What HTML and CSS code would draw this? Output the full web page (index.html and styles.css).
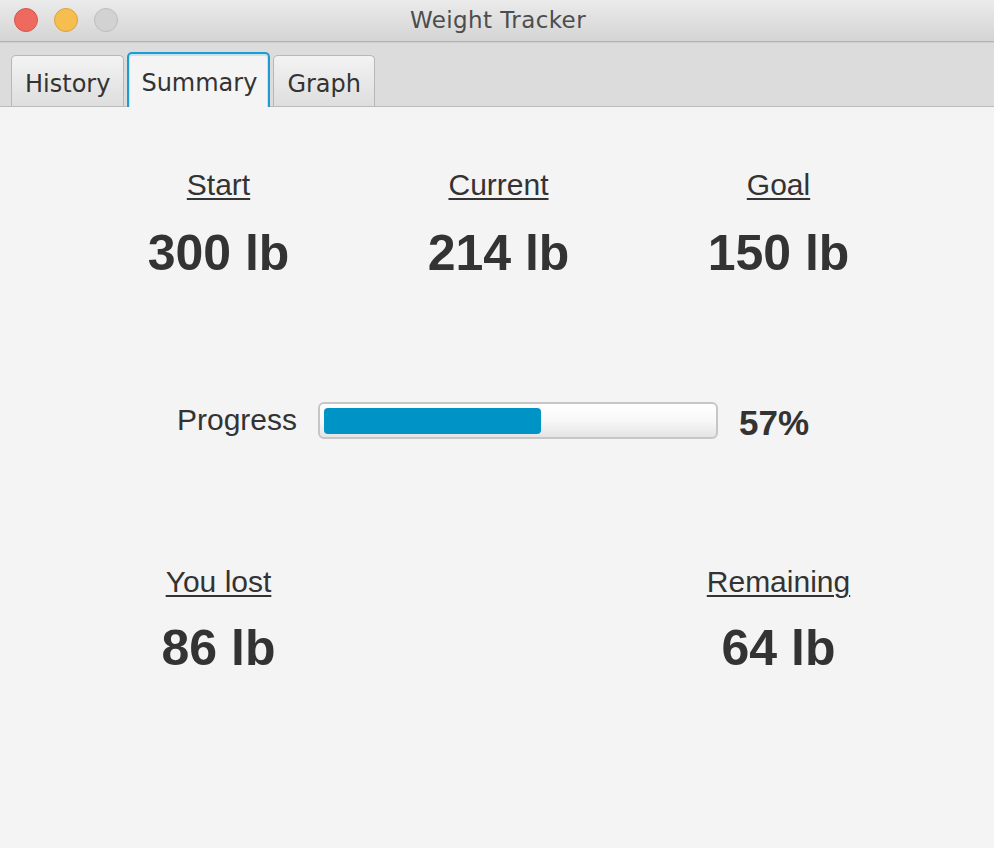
FILE: index.html
```html
<!DOCTYPE html>
<html lang="en">
<head>
<meta charset="utf-8">
<title>Weight Tracker</title>
<link rel="stylesheet" href="styles.css">
</head>
<body>
<div class="window">
  <header class="titlebar">
    <div class="lights">
      <span class="light light-close"></span>
      <span class="light light-min"></span>
      <span class="light light-max"></span>
    </div>
    <div class="title">Weight Tracker</div>
  </header>
  <nav class="tabbar">
    <div class="tab">History</div>
    <div class="tab tab-selected">Summary</div>
    <div class="tab">Graph</div>
  </nav>
  <main class="content">
    <section class="stats stats-top">
      <div class="stat">
        <div class="stat-label">Start</div>
        <div class="stat-value">300 lb</div>
      </div>
      <div class="stat">
        <div class="stat-label">Current</div>
        <div class="stat-value">214 lb</div>
      </div>
      <div class="stat">
        <div class="stat-label">Goal</div>
        <div class="stat-value">150 lb</div>
      </div>
    </section>
    <section class="progress-row">
      <div class="progress-label">Progress</div>
      <div class="progress-track">
        <div class="progress-fill" style="width:56%"></div>
      </div>
      <div class="progress-pct">57%</div>
    </section>
    <section class="stats stats-bottom">
      <div class="stat">
        <div class="stat-label">You lost</div>
        <div class="stat-value">86 lb</div>
      </div>
      <div class="stat"></div>
      <div class="stat">
        <div class="stat-label">Remaining</div>
        <div class="stat-value">64 lb</div>
      </div>
    </section>
  </main>
</div>
</body>
</html>
```
FILE: styles.css
```css
* { box-sizing: border-box; }
html, body {
  margin: 0;
  padding: 0;
  height: 100%;
}
body {
  background: #f4f4f4;
  font-family: "Liberation Sans", Arial, sans-serif;
  color: #333333;
}
.window {
  display: flex;
  flex-direction: column;
  height: 848px;
  width: 994px;
  overflow: hidden;
}
.titlebar {
  height: 42px;
  flex: none;
  background: linear-gradient(#ebebeb, #d4d4d4);
  border-bottom: 1px solid #b3b3b3;
  display: flex;
  align-items: center;
  position: relative;
}
.lights {
  display: flex;
  gap: 16px;
  padding-left: 14px;
  padding-bottom: 1px;
}
.light {
  width: 24px;
  height: 24px;
  border-radius: 50%;
  display: block;
}
.light-close { background: #ee6a5e; border: 1px solid #d7554b; }
.light-min { background: #f6be4f; border: 1px solid #dca13d; }
.light-max { background: #d2d2d2; border: 1px solid #bdbdbd; }
.title {
  position: absolute;
  left: 0;
  right: 0;
  top: 6px;
  padding-left: 2px;
  text-align: center;
  font-family: "DejaVu Sans", sans-serif;
  font-size: 23px;
  letter-spacing: 0.4px;
  line-height: 28px;
  color: #4d4d4d;
  pointer-events: none;
}
.tabbar {
  flex: none;
  height: 65px;
  background: #dcdcdc;
  border-top: 1px solid #cfcfcf;
  border-bottom: 1px solid #bcbcbc;
  display: flex;
  align-items: flex-end;
  gap: 3px;
  padding-left: 11px;
}
.tab {
  height: 51px;
  padding: 14px 13px 0;
  border: 1px solid #b7b7b7;
  border-bottom: none;
  border-radius: 5px 5px 0 0;
  background: linear-gradient(#f3f3f3, #dedede);
  font-family: "DejaVu Sans", sans-serif;
  font-size: 24px;
  line-height: 28px;
  color: #333333;
}
.tab-selected {
  height: 55px;
  margin-bottom: -1px;
  padding: 15px 11px 0 12px;
  border: 2px solid #1e9bd0;
  border-bottom: none;
  background: #f4f4f4;
  box-shadow: inset 0 1px 0 1px #c7e3ee;
}
.content {
  flex: 1;
  background: #f4f4f4;
  display: flex;
  flex-direction: column;
}
.stats {
  display: grid;
  grid-template-columns: repeat(3, 280px);
  justify-content: center;
  padding-left: 3px;
}
.stats-top { margin-top: 61px; }
.stats-bottom { margin-top: 122px; }
.stat {
  display: flex;
  flex-direction: column;
  align-items: center;
}
.stat-label {
  font-size: 30px;
  line-height: 34px;
  text-decoration: underline;
  text-decoration-thickness: 2px;
  text-underline-offset: 3px;
}
.stat-value {
  margin-top: 22px;
  font-size: 50px;
  font-weight: bold;
  line-height: 58px;
}
.stats-bottom .stat-value { margin-top: 20px; }
.progress-row {
  margin-top: 120px;
  display: flex;
  align-items: flex-start;
  padding-left: 177px;
  gap: 21px;
}
.progress-label {
  font-size: 30px;
  line-height: 34px;
  margin-top: 1px;
}
.progress-track {
  width: 400px;
  height: 37px;
  border: 2px solid #c6c6c6;
  border-radius: 6px;
  background: linear-gradient(#ffffff 0%, #f8f8f8 50%, #e4e4e4 100%);
  padding: 4px 4px 3px 4px;
}
.progress-fill {
  height: 100%;
  background: #0093c6;
  border-radius: 4px;
}
.progress-pct {
  font-size: 35px;
  font-weight: bold;
  line-height: 40px;
  margin-top: 1px;
}
```
